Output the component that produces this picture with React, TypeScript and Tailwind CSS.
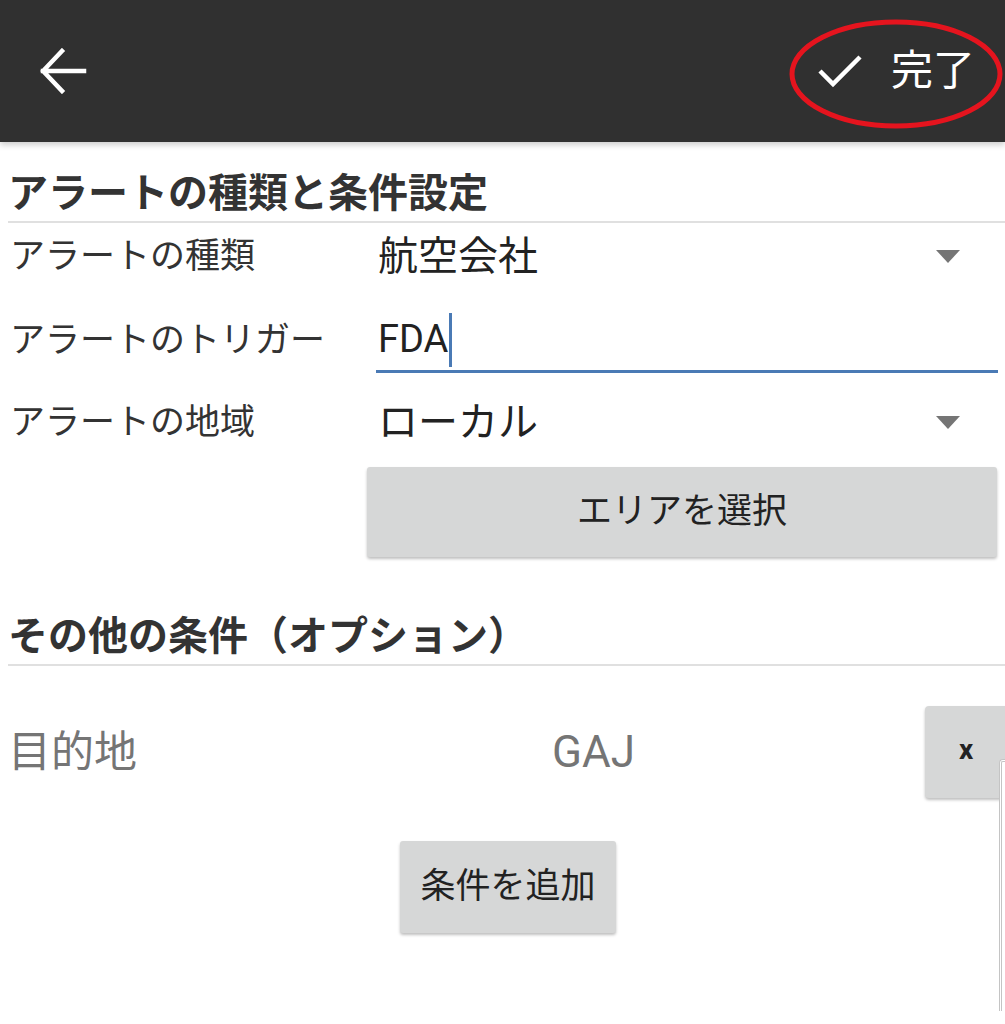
import React from "react";

const font = { fontFamily: "Roboto, 'Noto Sans CJK JP', sans-serif" };

function Triangle() {
  return (
    <svg width="24" height="14" viewBox="0 0 24 14" className="shrink-0">
      <path d="M0 0 L24 0 L12 13 Z" fill="#757575" />
    </svg>
  );
}

export default function App() {
  return (
    <div className="relative w-[1005px] h-[1024px] overflow-hidden bg-white" style={font}>
      {/* top bar */}
      <div className="relative h-[142px] bg-[#303030] shadow-[0_3px_6px_rgba(0,0,0,0.2)] flex items-center justify-between pl-[40px] pr-[30px]">
        <svg width="48" height="46" viewBox="0 0 48 46">
          <path d="M3 23 H44 M22 3 L3 23 L22 43" fill="none" stroke="#fff" strokeWidth="4.5" strokeLinecap="square" />
        </svg>
        <div className="flex items-center gap-[28px]">
          <svg width="46" height="34" viewBox="0 0 46 34">
            <path d="M3 17 L16 30 L43 3" fill="none" stroke="#fff" strokeWidth="4.5" />
          </svg>
          <span className="text-white text-[42px] leading-none">完了</span>
        </div>
        <svg className="absolute left-[788px] top-[18px]" width="216" height="112" viewBox="0 0 216 112">
          <ellipse cx="108" cy="56" rx="104" ry="52" fill="none" stroke="#e5141e" strokeWidth="5" />
        </svg>
      </div>

      <div className="pl-2">
        {/* section 1 */}
        <h1 className="mt-[32px] text-[40px] leading-none font-bold text-[#333]">アラートの種類と条件設定</h1>
        <div className="mt-[7px] h-[2px] bg-[#e0e0e0]" />

        <div className="grid grid-cols-[360px_1fr] items-center">
          <div className="h-[68px] flex items-center pl-[2px] text-[35px] text-[#333]">アラートの種類</div>
          <div className="h-[68px] flex items-center justify-between pl-[10px] pr-[45px] text-[40px] text-[#222]">
            <span>航空会社</span>
            <Triangle />
          </div>

          <div className="h-[100px] flex items-center pl-[2px] text-[35px] text-[#333]">アラートのトリガー</div>
          <div className="h-[100px] flex items-center">
            <div className="ml-[8px] mr-[7px] w-full h-[64px] border-b-[3px] border-[#4a7ab5] flex items-center pl-[2px] text-[38px] text-[#222]">
              <span>FDA</span>
              <span className="ml-[1px] w-[3px] h-[54px] bg-[#4a7ab5]" />
            </div>
          </div>

          <div className="h-[64px] flex items-center pl-[2px] text-[35px] text-[#333]">アラートの地域</div>
          <div className="h-[64px] flex items-center justify-between pl-[10px] pr-[45px] text-[40px] text-[#222]">
            <span>ローカル</span>
            <Triangle />
          </div>

          <div />
          <div className="pt-[12px] pr-[7px]">
            <button className="-ml-[1px] w-full h-[90px] rounded-[3px] bg-[#d6d7d7] shadow-[0_2px_3px_rgba(0,0,0,0.25)] text-[35px] text-[#222]">
              エリアを選択
            </button>
          </div>
        </div>

        {/* section 2 */}
        <h2 className="mt-[60px] text-[40px] leading-none font-bold text-[#333]">その他の条件（オプション）</h2>
        <div className="mt-[7px] h-[2px] bg-[#e0e0e0]" />

        <div className="mt-[40px] flex items-center h-[92px]">
          <span className="w-[544px] shrink-0 text-[43px] text-[#757575]">目的地</span>
          <span className="w-[373px] shrink-0 text-[44px] text-[#757575]">GAJ</span>
          <button className="w-[100px] h-[92px] shrink-0 rounded-[4px] bg-[#d6d7d7] shadow-[0_2px_3px_rgba(0,0,0,0.25)] flex items-center pl-[34px] pb-[4px] text-[28px] font-bold text-[#222]">
            x
          </button>
        </div>

        <div className="mt-[43px] flex">
          <button className="ml-[392px] w-[216px] h-[92px] rounded-[3px] bg-[#d6d7d7] shadow-[0_2px_3px_rgba(0,0,0,0.25)] text-[35px] text-[#222]">
            条件を追加
          </button>
        </div>
      </div>

      {/* edge of an overlapping panel */}
      <div className="absolute left-[999px] top-[759px] w-[20px] h-[252px] rounded-tl-[4px] border-l-[3px] border-t-[3px] border-double border-[#c4c4c4] bg-white" />
    </div>
  );
}
